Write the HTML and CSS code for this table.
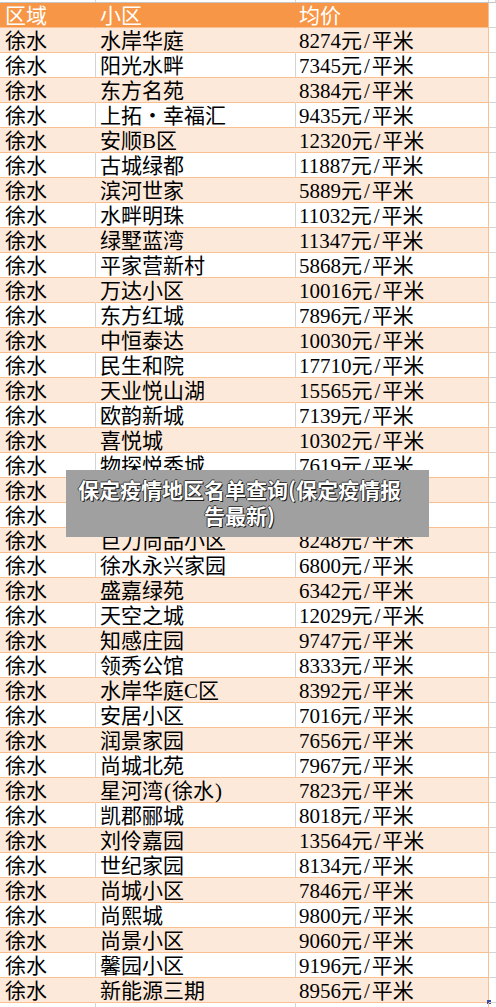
FILE: index.html
```html
<!DOCTYPE html>
<html lang="zh-CN">
<head>
<meta charset="utf-8">
<title>保定疫情地区名单查询</title>
<link rel="stylesheet" href="styles.css">
</head>
<body>
<div class="sheet">
  <div class="topstrip"><span class="tc a"></span><span class="tc b"></span><span class="tc c"></span><span class="tc d"></span></div>
  <div class="row head"><div class="cell a">区域</div><div class="cell b">小区</div><div class="cell c">均价</div><div class="cell d"></div></div>
  <div class="row fill"><div class="cell a">徐水</div><div class="cell b">水岸华庭</div><div class="cell c">8274元<span class="sl">/</span>平米</div><div class="cell d"></div></div>
  <div class="row"><div class="cell a">徐水</div><div class="cell b">阳光水畔</div><div class="cell c">7345元<span class="sl">/</span>平米</div><div class="cell d"></div></div>
  <div class="row fill"><div class="cell a">徐水</div><div class="cell b">东方名苑</div><div class="cell c">8384元<span class="sl">/</span>平米</div><div class="cell d"></div></div>
  <div class="row"><div class="cell a">徐水</div><div class="cell b">上拓・幸福汇</div><div class="cell c">9435元<span class="sl">/</span>平米</div><div class="cell d"></div></div>
  <div class="row fill"><div class="cell a">徐水</div><div class="cell b">安顺B区</div><div class="cell c">12320元<span class="sl">/</span>平米</div><div class="cell d"></div></div>
  <div class="row"><div class="cell a">徐水</div><div class="cell b">古城绿都</div><div class="cell c">11887元<span class="sl">/</span>平米</div><div class="cell d"></div></div>
  <div class="row fill"><div class="cell a">徐水</div><div class="cell b">滨河世家</div><div class="cell c">5889元<span class="sl">/</span>平米</div><div class="cell d"></div></div>
  <div class="row"><div class="cell a">徐水</div><div class="cell b">水畔明珠</div><div class="cell c">11032元<span class="sl">/</span>平米</div><div class="cell d"></div></div>
  <div class="row fill"><div class="cell a">徐水</div><div class="cell b">绿墅蓝湾</div><div class="cell c">11347元<span class="sl">/</span>平米</div><div class="cell d"></div></div>
  <div class="row"><div class="cell a">徐水</div><div class="cell b">平家营新村</div><div class="cell c">5868元<span class="sl">/</span>平米</div><div class="cell d"></div></div>
  <div class="row fill"><div class="cell a">徐水</div><div class="cell b">万达小区</div><div class="cell c">10016元<span class="sl">/</span>平米</div><div class="cell d"></div></div>
  <div class="row"><div class="cell a">徐水</div><div class="cell b">东方红城</div><div class="cell c">7896元<span class="sl">/</span>平米</div><div class="cell d"></div></div>
  <div class="row fill"><div class="cell a">徐水</div><div class="cell b">中恒泰达</div><div class="cell c">10030元<span class="sl">/</span>平米</div><div class="cell d"></div></div>
  <div class="row"><div class="cell a">徐水</div><div class="cell b">民生和院</div><div class="cell c">17710元<span class="sl">/</span>平米</div><div class="cell d"></div></div>
  <div class="row fill"><div class="cell a">徐水</div><div class="cell b">天业悦山湖</div><div class="cell c">15565元<span class="sl">/</span>平米</div><div class="cell d"></div></div>
  <div class="row"><div class="cell a">徐水</div><div class="cell b">欧韵新城</div><div class="cell c">7139元<span class="sl">/</span>平米</div><div class="cell d"></div></div>
  <div class="row fill"><div class="cell a">徐水</div><div class="cell b">喜悦城</div><div class="cell c">10302元<span class="sl">/</span>平米</div><div class="cell d"></div></div>
  <div class="row"><div class="cell a">徐水</div><div class="cell b">物探悦秀城</div><div class="cell c">7619元<span class="sl">/</span>平米</div><div class="cell d"></div></div>
  <div class="row fill"><div class="cell a">徐水</div><div class="cell b"></div><div class="cell c"></div><div class="cell d"></div></div>
  <div class="row"><div class="cell a">徐水</div><div class="cell b"></div><div class="cell c"></div><div class="cell d"></div></div>
  <div class="row fill"><div class="cell a">徐水</div><div class="cell b">巨力尚品小区</div><div class="cell c">8248元<span class="sl">/</span>平米</div><div class="cell d"></div></div>
  <div class="row"><div class="cell a">徐水</div><div class="cell b">徐水永兴家园</div><div class="cell c">6800元<span class="sl">/</span>平米</div><div class="cell d"></div></div>
  <div class="row fill"><div class="cell a">徐水</div><div class="cell b">盛嘉绿苑</div><div class="cell c">6342元<span class="sl">/</span>平米</div><div class="cell d"></div></div>
  <div class="row"><div class="cell a">徐水</div><div class="cell b">天空之城</div><div class="cell c">12029元<span class="sl">/</span>平米</div><div class="cell d"></div></div>
  <div class="row fill"><div class="cell a">徐水</div><div class="cell b">知感庄园</div><div class="cell c">9747元<span class="sl">/</span>平米</div><div class="cell d"></div></div>
  <div class="row"><div class="cell a">徐水</div><div class="cell b">领秀公馆</div><div class="cell c">8333元<span class="sl">/</span>平米</div><div class="cell d"></div></div>
  <div class="row fill"><div class="cell a">徐水</div><div class="cell b">水岸华庭C区</div><div class="cell c">8392元<span class="sl">/</span>平米</div><div class="cell d"></div></div>
  <div class="row"><div class="cell a">徐水</div><div class="cell b">安居小区</div><div class="cell c">7016元<span class="sl">/</span>平米</div><div class="cell d"></div></div>
  <div class="row fill"><div class="cell a">徐水</div><div class="cell b">润景家园</div><div class="cell c">7656元<span class="sl">/</span>平米</div><div class="cell d"></div></div>
  <div class="row"><div class="cell a">徐水</div><div class="cell b">尚城北苑</div><div class="cell c">7967元<span class="sl">/</span>平米</div><div class="cell d"></div></div>
  <div class="row fill"><div class="cell a">徐水</div><div class="cell b">星河湾<span class="pa">(</span>徐水<span class="pa">)</span></div><div class="cell c">7823元<span class="sl">/</span>平米</div><div class="cell d"></div></div>
  <div class="row"><div class="cell a">徐水</div><div class="cell b">凯郡郦城</div><div class="cell c">8018元<span class="sl">/</span>平米</div><div class="cell d"></div></div>
  <div class="row fill"><div class="cell a">徐水</div><div class="cell b">刘伶嘉园</div><div class="cell c">13564元<span class="sl">/</span>平米</div><div class="cell d"></div></div>
  <div class="row"><div class="cell a">徐水</div><div class="cell b">世纪家园</div><div class="cell c">8134元<span class="sl">/</span>平米</div><div class="cell d"></div></div>
  <div class="row fill"><div class="cell a">徐水</div><div class="cell b">尚城小区</div><div class="cell c">7846元<span class="sl">/</span>平米</div><div class="cell d"></div></div>
  <div class="row"><div class="cell a">徐水</div><div class="cell b">尚熙城</div><div class="cell c">9800元<span class="sl">/</span>平米</div><div class="cell d"></div></div>
  <div class="row fill"><div class="cell a">徐水</div><div class="cell b">尚景小区</div><div class="cell c">9060元<span class="sl">/</span>平米</div><div class="cell d"></div></div>
  <div class="row"><div class="cell a">徐水</div><div class="cell b">馨园小区</div><div class="cell c">9196元<span class="sl">/</span>平米</div><div class="cell d"></div></div>
  <div class="row fill last"><div class="cell a">徐水</div><div class="cell b">新能源三期</div><div class="cell c">8956元<span class="sl">/</span>平米<span class="handle"></span></div><div class="cell d"></div></div>
  <div class="row blank"><div class="cell a"></div><div class="cell b"></div><div class="cell c"></div><div class="cell d"></div></div>
  <div class="caption">保定疫情地区名单查询(保定疫情报告最新)</div>
</div>
</body>
</html>
```

FILE: styles.css
```css
html, body {
  margin: 0;
  padding: 0;
  background: #ffffff;
}

.sheet {
  position: relative;
  width: 496px;
  height: 1007px;
  overflow: hidden;
  font-family: "Liberation Serif", "Noto Sans CJK SC", serif;
  font-size: 21px;
  color: #000000;
}

.topstrip {
  display: grid;
  grid-template-columns: 96px 200px 193px 7px;
  height: 3px;
  box-sizing: border-box;
  border-bottom: 1px solid #c6c6c6;
}

.tc {
  border-right: 1px solid #d4d4d4;
}

.row {
  display: grid;
  grid-template-columns: 96px 200px 193px 7px;
  height: 25px;
}

.cell {
  position: relative;
  box-sizing: border-box;
  height: 25px;
  line-height: 26px;
  white-space: nowrap;
  overflow: visible;
  border-bottom: 1px solid #fac090;
  border-right: 1px solid #d4d4d4;
}

.cell.a { padding-left: 5px; }
.cell.b { padding-left: 4px; }
.cell.c { padding-left: 3px; border-right-color: #fac090; }
.cell.d { border-right: none; border-bottom-color: #d4d4d4; }

.sl {
  display: inline-block;
  padding: 0 2px;
}

.pa {
  display: inline-block;
  padding: 0 1px;
}

.row.fill .cell.a,
.row.fill .cell.b,
.row.fill .cell.c {
  background: #fde9d9;
}
.row.fill .cell.a,
.row.fill .cell.b {
  border-right-color: #fde9d9;
}

.row.head .cell.a,
.row.head .cell.b,
.row.head .cell.c {
  background: #f79646;
  color: #ffffff;
}
.row.head .cell.a,
.row.head .cell.b {
  border-right-color: #f79646;
}

.row.blank .cell {
  border-bottom-color: #d4d4d4;
}
.row.blank .cell.c {
  border-right-color: #fac090;
}

.handle {
  position: absolute;
  right: -3px;
  bottom: -2px;
  width: 4px;
  height: 4px;
  background: #3a4ea8;
}

.caption {
  position: absolute;
  left: 66px;
  top: 470px;
  width: 363px;
  height: 67px;
  box-sizing: border-box;
  padding: 6px 22px 0 6px;
  background: #a0a0a0;
  color: #ffffff;
  font-family: "Noto Sans CJK SC", sans-serif;
  font-weight: 700;
  font-size: 21px;
  line-height: 26px;
  text-align: center;
  text-shadow: 1px 1px 0 #1a1a1a, -1px 0 0 #3a3a3a, 0 -1px 0 #3a3a3a;
}
```
